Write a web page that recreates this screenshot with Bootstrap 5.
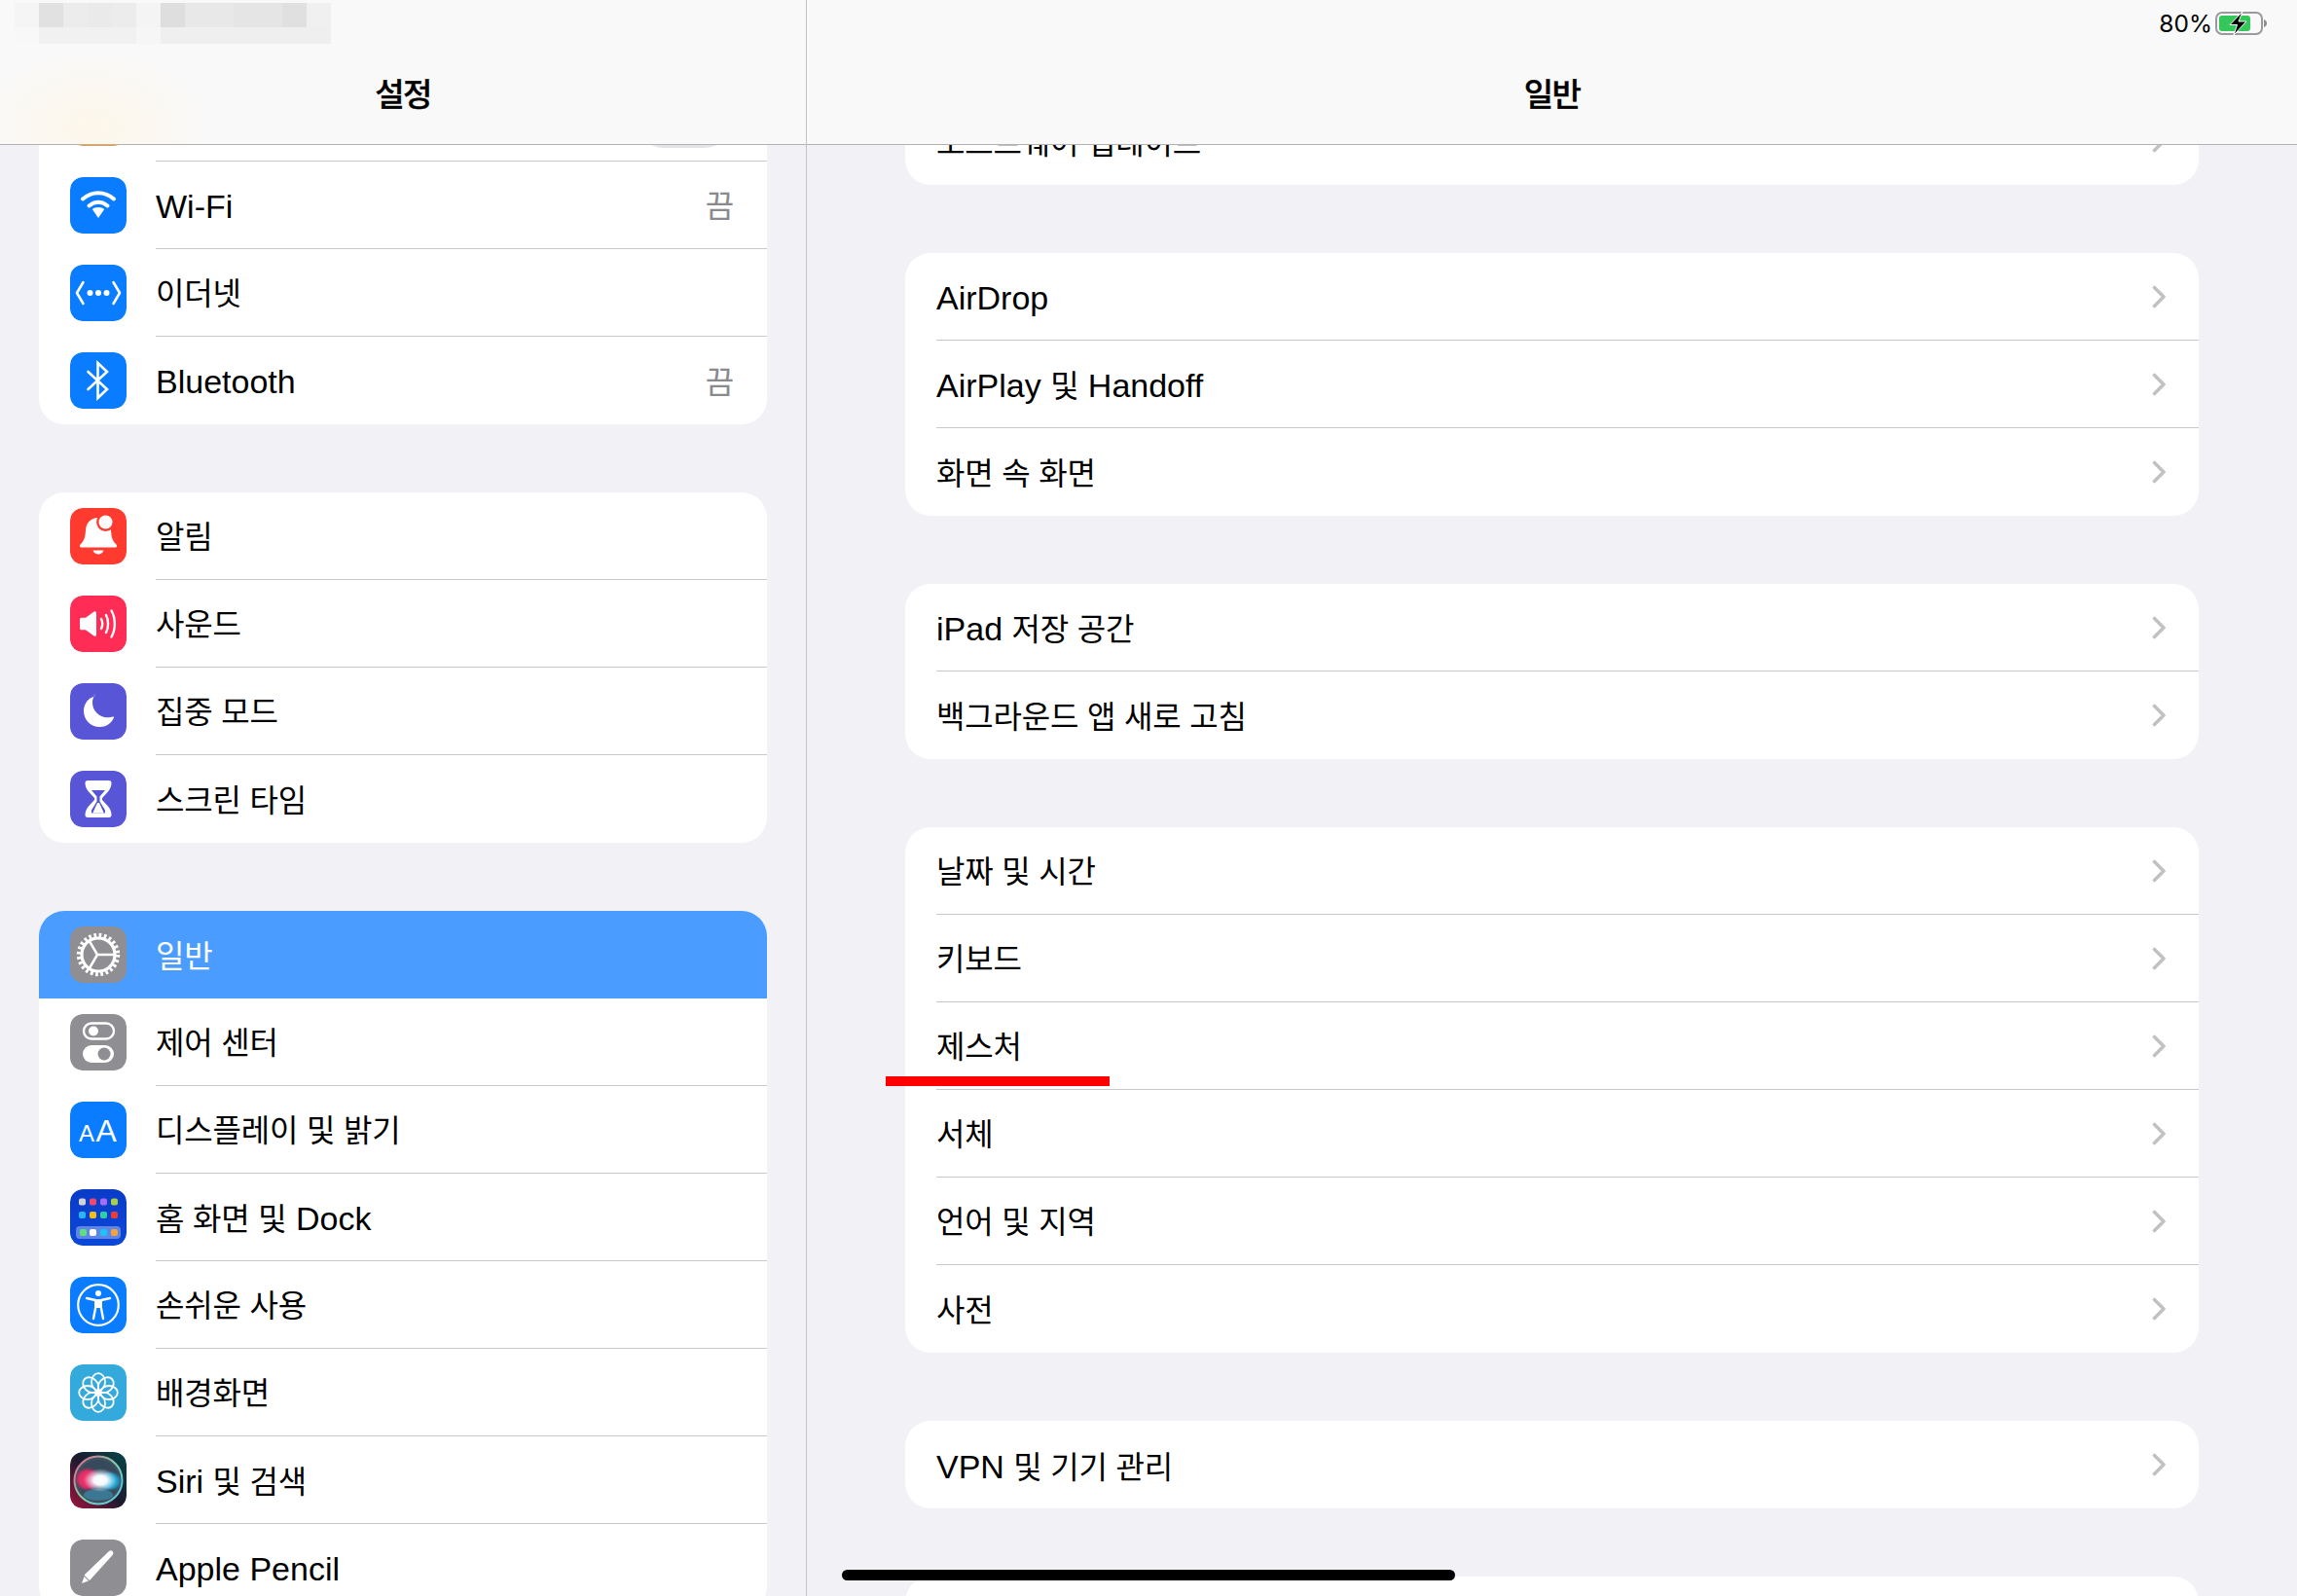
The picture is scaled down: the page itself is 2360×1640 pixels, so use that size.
<!DOCTYPE html>
<html lang="ko">
<head>
<meta charset="utf-8">
<title>설정 - 일반</title>
<link href="https://cdn.jsdelivr.net/npm/bootstrap@5.3.0/dist/css/bootstrap.min.css" rel="stylesheet">
<style>
html,body{width:2360px;height:1640px;overflow:hidden;margin:0}
body{background:#f1f1f6;color:#000;font-family:"Liberation Sans","Noto Sans CJK KR",sans-serif;font-size:34px;line-height:1}
.ko{font-family:"Noto Sans CJK KR",sans-serif;font-size:32px;letter-spacing:-.2px}
.stage{width:2360px;height:1640px;overflow:hidden}
.side{width:829px;height:1640px;border-right:1px solid #c3c3c6;padding:76px 40px 0;overflow:hidden;position:relative;flex:none}
.main{width:1531px;height:1640px;padding:100px 101px 0;overflow:hidden;position:relative;flex:none}
.sheet{background:#fff;border-radius:26px;overflow:hidden;margin-bottom:70px}
.line{height:90px;display:flex;align-items:center;position:relative;padding-left:32px;padding-right:34px}
.line-in{flex:1;min-width:0;height:100%;display:flex;align-items:center;justify-content:space-between;border-bottom:1px solid #c8c8cb;margin-right:-34px;padding-right:34px}
.line-in>span{padding-top:2px}
.line-in>span.ko{padding-top:0;padding-bottom:3px}
.line:last-child .line-in{border-bottom:0}
.side .line-in{margin-left:30px}
.tile{width:58px;height:58px;border-radius:13px;flex:none;display:block}
.off{color:#8a8a8e;font-size:32px}
.on{background:#4a9dfe;color:#fff}
.on .line-in{border-bottom:0}
.cv{width:14px;height:24px;flex:none}
.cv path{fill:none;stroke:#c2c2c5;stroke-width:3.6;stroke-linecap:round;stroke-linejoin:round}
.sw{width:102px;height:62px;border-radius:31px;background:#e3e3e8;flex:none}
.top{position:absolute;top:0;left:0;right:0;height:149px;background:#f9f9f9;border-bottom:1px solid #b2b2b2;display:flex;align-items:center;justify-content:center;padding-top:43px;z-index:5}
.top-l{background:radial-gradient(ellipse 120px 80px at 95px 130px,#fdf7ea 0,#fbf8f2 55%,rgba(249,249,249,0) 100%),#f9f9f9}
.top .ko{font-size:33px;letter-spacing:-1.6px;font-weight:500;-webkit-text-stroke:.4px #000}
.blurred{position:absolute;left:15px;top:3px;width:325px;height:42px;z-index:6;background:linear-gradient(90deg,#f5f5f5 0 25px,#e1e1e1 25px 50px,#ececec 50px 75px,#eaeaea 75px 100px,#ececec 100px 125px,#f4f4f4 125px 150px,#dedede 150px 175px,#e8e8e8 175px 225px,#e5e5e5 225px 275px,#e0e0e0 275px 300px,#f0f0f0 300px 325px) top/100% 25px no-repeat,linear-gradient(90deg,#f8f8f8 0 25px,#f1f1f1 25px 125px,#f6f6f6 125px 150px,#efefef 150px 325px)}
.stat{position:absolute;top:12px;right:30px;display:flex;align-items:center;gap:3px;z-index:6;font-family:"Inter",sans-serif;font-size:24.500px}
.slash{position:absolute;left:910px;top:1106px;width:230px;height:10px;background:#ff0000;z-index:7}
.grab{position:absolute;left:865px;top:1613px;width:630px;height:11px;border-radius:6px;background:#000;z-index:7}
</style>
</head>
<body>
<div class="stage d-flex position-relative">

<div class="side">
  <div class="top top-l"><span class="ko">설정</span></div>
  <div class="blurred"></div>
  <div class="sheet">
    <div class="line">
      <svg class="tile" viewBox="0 0 58 58"><rect width="58" height="58" rx="13" fill="#f49b2e"/></svg>
      <div class="line-in"><span class="ko">에어플레인 모드</span><div class="sw"></div></div>
    </div>
    <div class="line">
      <svg class="tile" viewBox="0 0 58 58"><rect width="58" height="58" rx="13" fill="#0a7cff"/><g fill="none" stroke="#fff" stroke-width="4" stroke-linecap="round"><path d="M13 22.500c9.500-8.500 22.500-8.500 32 0"/><path d="M19.500 29.500c5.800-5 13.200-5 19 0"/></g><path d="M29 31c2.800 0 5 .8 6.200 2L29 42l-6.200-9c1.200-1.200 3.400-2 6.200-2z" fill="#fff"/></svg>
      <div class="line-in"><span>Wi-Fi</span><span class="off ko">끔</span></div>
    </div>
    <div class="line">
      <svg class="tile" viewBox="0 0 58 58"><rect width="58" height="58" rx="13" fill="#0a7cff"/><path d="M13.500 18 7 29l6.500 11M44.500 18 51 29l-6.500 11" fill="none" stroke="#fff" stroke-width="2.600" stroke-linecap="round" stroke-linejoin="round"/><circle cx="20.500" cy="29" r="3" fill="#fff"/><circle cx="29" cy="29" r="3" fill="#fff"/><circle cx="37.500" cy="29" r="3" fill="#fff"/></svg>
      <div class="line-in"><span class="ko">이더넷</span></div>
    </div>
    <div class="line">
      <svg class="tile" viewBox="0 0 58 58"><rect width="58" height="58" rx="13" fill="#0a7cff"/><path d="M18.500 20 38 38 28.500 47V11l9.500 9L18.500 38" fill="none" stroke="#fff" stroke-width="2.600" stroke-linejoin="miter" stroke-linecap="round"/></svg>
      <div class="line-in"><span>Bluetooth</span><span class="off ko">끔</span></div>
    </div>
  </div>

  <div class="sheet">
    <div class="line">
      <svg class="tile" viewBox="0 0 58 58"><rect width="58" height="58" rx="13" fill="#ff3b30"/><path d="M29 10c-8 0-12.500 5.500-13 13-.5 8-2 11-5.500 14.500-1.200 1.200-.6 3 1.200 3h34.600c1.800 0 2.400-1.800 1.200-3C44 34 42.500 31 42 23c-.5-7.500-5-13-13-13z" fill="#fff"/><path d="M23.500 43.500h11c-.8 2.500-3 4-5.500 4s-4.700-1.500-5.500-4z" fill="#fff"/><circle cx="36.500" cy="14.500" r="8.200" fill="#fff" stroke="#ff3b30" stroke-width="2.400"/></svg>
      <div class="line-in"><span class="ko">알림</span></div>
    </div>
    <div class="line">
      <svg class="tile" viewBox="0 0 58 58"><rect width="58" height="58" rx="13" fill="#ff2d55"/><path d="M10 24.500c0-1 .8-1.800 1.800-1.800h4.200L24.500 16.500c1-.8 2.500-.2 2.500 1.200v22.600c0 1.400-1.500 2-2.500 1.200L16 35.300h-4.200c-1 0-1.800-.8-1.800-1.800z" fill="#fff"/><g fill="none" stroke="#fff" stroke-width="2.400" stroke-linecap="round"><path d="M32 24c1.500 3 1.500 7 0 10"/><path d="M37 20c2.700 5 2.700 13 0 18"/><path d="M42.500 15.500c4.500 8 4.500 19 0 27"/></g></svg>
      <div class="line-in"><span class="ko">사운드</span></div>
    </div>
    <div class="line">
      <svg class="tile" viewBox="0 0 58 58"><rect width="58" height="58" rx="13" fill="#5856d6"/><path d="M25.500 12.500C17.500 14.500 14 21.500 14 27.500 14 36.500 21 44 30.500 44c6 0 11.500-3 14.500-9.500.3-.7-.3-1.200-1-1-1.800.6-3.500.8-5.200.8-9.500 0-15.800-7.500-15.800-15.300 0-2.500.6-5 2.200-7.200.5-.7-.1-1.500-.7-1.300z" fill="#fff" transform="translate(0 1)"/></svg>
      <div class="line-in"><span class="ko">집중 모드</span></div>
    </div>
    <div class="line">
      <svg class="tile" viewBox="0 0 58 58"><rect width="58" height="58" rx="13" fill="#5856d6"/><path d="M18 10h22c1.500 0 2.500 1 2.500 2.500 0 3-1 6-3.500 9L33 28v2l6 6.500c2.500 3 3.500 6 3.500 9 0 1.500-1 2.500-2.500 2.500H18c-1.500 0-2.500-1-2.500-2.500 0-3 1-6 3.500-9L25 30v-2l-6-6.500c-2.500-3-3.500-6-3.500-9 0-1.500 1-2.500 2.500-2.500z" fill="#fff"/><path d="M22 20h14l-5.500 6.500v5l5.500 9v3H22v-3l5.500-9v-5z" fill="#5856d6"/><path d="M28 33h2l4.500 10h-11z" fill="#fff"/><path d="M23.500 43.500h11v1.500h-11z" fill="#fff"/></svg>
      <div class="line-in"><span class="ko">스크린 타임</span></div>
    </div>
  </div>

  <div class="sheet">
    <div class="line on">
      <svg class="tile" viewBox="0 0 58 58"><rect width="58" height="58" rx="13" fill="#8e8e93"/><circle cx="29" cy="29" r="17" fill="none" stroke="#fff" stroke-width="3.200"/><circle cx="29" cy="29" r="20" fill="none" stroke="#fff" stroke-width="4.400" stroke-dasharray="2.700 2.536"/><path d="M28 29H45M28 29 19.500 14.300M28 29 19.500 43.700" fill="none" stroke="#fff" stroke-width="2.500"/></svg>
      <div class="line-in"><span class="ko">일반</span></div>
    </div>
    <div class="line">
      <svg class="tile" viewBox="0 0 58 58"><rect width="58" height="58" rx="13" fill="#8e8e93"/><rect x="14" y="9.500" width="31" height="16" rx="8" fill="none" stroke="#fff" stroke-width="2.400"/><circle cx="24" cy="17.500" r="5" fill="#fff"/><rect x="13" y="32" width="32" height="18" rx="9" fill="#fff"/><circle cx="35" cy="41" r="6.500" fill="#8e8e93"/></svg>
      <div class="line-in"><span class="ko">제어 센터</span></div>
    </div>
    <div class="line">
      <svg class="tile" viewBox="0 0 58 58"><rect width="58" height="58" rx="13" fill="#0a7cff"/><text x="9" y="41" fill="#fff" font-family="Liberation Sans, sans-serif" font-size="24">A</text><text x="26.500" y="41" fill="#fff" font-family="Liberation Sans, sans-serif" font-size="32">A</text></svg>
      <div class="line-in"><span class="ko">디스플레이 및 밝기</span></div>
    </div>
    <div class="line">
      <svg class="tile" viewBox="0 0 58 58"><defs><linearGradient id="hg" x1="0" y1="0" x2="0" y2="1"><stop offset="0" stop-color="#0a3bc9"/><stop offset="1" stop-color="#0b48d8"/></linearGradient></defs><rect width="58" height="58" rx="13" fill="url(#hg)"/><g><rect x="9" y="9.500" width="7" height="7" rx="2" fill="#d5d5d5"/><rect x="20" y="9.500" width="7" height="7" rx="2" fill="#f0476e"/><rect x="31" y="9.500" width="7" height="7" rx="2" fill="#a86bf2"/><rect x="42" y="9.500" width="7" height="7" rx="2" fill="#a9cf47"/><rect x="9" y="23" width="7" height="7" rx="2" fill="#28b5f2"/><rect x="20" y="23" width="7" height="7" rx="2" fill="#f5bd17"/><rect x="31" y="23" width="7" height="7" rx="2" fill="#33cfa0"/><rect x="42" y="23" width="7" height="7" rx="2" fill="#f03a3a"/><rect x="6" y="38" width="46" height="13" rx="4" fill="#5f86e6"/><rect x="10" y="41" width="7" height="7" rx="2" fill="#5de07f"/><rect x="20" y="41" width="7" height="7" rx="2" fill="#fff"/><rect x="31" y="41" width="7" height="7" rx="2" fill="#1fc2f5"/><rect x="42" y="41" width="7" height="7" rx="2" fill="#f5a33a"/></g></svg>
      <div class="line-in"><span><span class="ko">홈 화면 및</span> Dock</span></div>
    </div>
    <div class="line">
      <svg class="tile" viewBox="0 0 58 58"><rect width="58" height="58" rx="13" fill="#0a7cff"/><circle cx="29" cy="29" r="20.800" fill="none" stroke="#fff" stroke-width="2.200"/><circle cx="29" cy="17" r="3" fill="#fff"/><path d="M25 23h8v9h-8z" fill="#fff"/><path d="M17 22 26 24M41 22 32 24M26.500 30 24 43M31.500 30 34 43" fill="none" stroke="#fff" stroke-width="2.400" stroke-linecap="round"/></svg>
      <div class="line-in"><span class="ko">손쉬운 사용</span></div>
    </div>
    <div class="line">
      <svg class="tile" viewBox="0 0 58 58"><rect width="58" height="58" rx="13" fill="#34aadc"/><g fill="none" stroke="#fff" stroke-width="1.800"><ellipse cx="29" cy="18" rx="7" ry="8.800"/><ellipse cx="29" cy="40" rx="7" ry="8.800"/><ellipse cx="18" cy="29" rx="8.800" ry="7"/><ellipse cx="40" cy="29" rx="8.800" ry="7"/><ellipse cx="29" cy="18" rx="7" ry="8.800" transform="rotate(45 29 29)"/><ellipse cx="29" cy="40" rx="7" ry="8.800" transform="rotate(45 29 29)"/><ellipse cx="18" cy="29" rx="8.800" ry="7" transform="rotate(45 29 29)"/><ellipse cx="40" cy="29" rx="8.800" ry="7" transform="rotate(45 29 29)"/></g><circle cx="29" cy="29" r="3.200" fill="#fff"/></svg>
      <div class="line-in"><span class="ko">배경화면</span></div>
    </div>
    <div class="line">
      <svg class="tile" viewBox="0 0 58 58"><defs><linearGradient id="sb" x1="0" y1="1" x2="1" y2="0"><stop offset="0" stop-color="#a3123f"/><stop offset=".5" stop-color="#1c1a2e"/><stop offset="1" stop-color="#07474a"/></linearGradient><linearGradient id="sr" x1="0" y1="0" x2="1" y2="1"><stop offset="0" stop-color="#e85d8a"/><stop offset=".5" stop-color="#7fd0a8"/><stop offset="1" stop-color="#58c3e8"/></linearGradient><radialGradient id="sw"><stop offset="0" stop-color="#fff"/><stop offset=".4" stop-color="#f4f9ff"/><stop offset="1" stop-color="#cfe8ff" stop-opacity="0"/></radialGradient><radialGradient id="sl"><stop offset="0" stop-color="#ff3a6c"/><stop offset=".7" stop-color="#d92f66"/><stop offset="1" stop-color="#b52a5c" stop-opacity=".2"/></radialGradient><radialGradient id="sc"><stop offset="0" stop-color="#2ec4ec"/><stop offset=".7" stop-color="#2296c0"/><stop offset="1" stop-color="#1a7fa5" stop-opacity=".2"/></radialGradient></defs><rect width="58" height="58" rx="13" fill="url(#sb)"/><circle cx="29" cy="29" r="24.500" fill="#3f5060" stroke="url(#sr)" stroke-width="2"/><circle cx="29" cy="29" r="21" fill="#364a5c"/><ellipse cx="18" cy="28" rx="13" ry="12" fill="url(#sl)"/><ellipse cx="41" cy="30" rx="12" ry="10" fill="url(#sc)"/><ellipse cx="29" cy="44" rx="15" ry="6" fill="#3fa2c9" opacity=".5"/><ellipse cx="31" cy="29" rx="17" ry="12" fill="url(#sw)"/></svg>
      <div class="line-in"><span>Siri <span class="ko">및 검색</span></span></div>
    </div>
    <div class="line">
      <svg class="tile" viewBox="0 0 58 58"><rect width="58" height="58" rx="13" fill="#8e8e93"/><path d="M40.500 12.500c1.800-1.800 4.300.7 2.500 3L20 41l-4.500-4.500z" fill="#fff" stroke="#fff" stroke-width="1.500" stroke-linejoin="round"/><path d="M14.500 38 19 42.500l-7 2.500z" fill="#fff"/></svg>
      <div class="line-in"><span>Apple Pencil</span></div>
    </div>
  </div>
</div>

<div class="main">
  <div class="top"><span class="ko">일반</span></div>
  <div class="stat"><span>80%</span>
    <svg width="54" height="24" viewBox="0 0 54 24"><rect x="1" y="1" width="47" height="22" rx="6" fill="none" stroke="#9a9a9e" stroke-width="2"/><rect x="4" y="4" width="32" height="16" rx="3" fill="#34c759"/><path d="M50 8c2 .7 3 2.200 3 4s-1 3.300-3 4z" fill="#8f8f93"/><path d="M28 0 15 13.500h7.500L19 24l13-14h-8z" fill="#000" stroke="#fff" stroke-width="1"/></svg>
  </div>
  <div class="sheet">
    <div class="line"><div class="line-in"><span class="ko">소프트웨어 업데이트</span><svg class="cv" viewBox="0 0 14 24"><path d="M2.500 2.500 12 12l-9.500 9.500"/></svg></div></div>
  </div>
  <div class="sheet">
    <div class="line"><div class="line-in"><span>AirDrop</span><svg class="cv" viewBox="0 0 14 24"><path d="M2.500 2.500 12 12l-9.500 9.500"/></svg></div></div>
    <div class="line"><div class="line-in"><span>AirPlay <span class="ko">및</span> Handoff</span><svg class="cv" viewBox="0 0 14 24"><path d="M2.500 2.500 12 12l-9.500 9.500"/></svg></div></div>
    <div class="line"><div class="line-in"><span class="ko">화면 속 화면</span><svg class="cv" viewBox="0 0 14 24"><path d="M2.500 2.500 12 12l-9.500 9.500"/></svg></div></div>
  </div>
  <div class="sheet">
    <div class="line"><div class="line-in"><span>iPad <span class="ko">저장 공간</span></span><svg class="cv" viewBox="0 0 14 24"><path d="M2.500 2.500 12 12l-9.500 9.500"/></svg></div></div>
    <div class="line"><div class="line-in"><span class="ko">백그라운드 앱 새로 고침</span><svg class="cv" viewBox="0 0 14 24"><path d="M2.500 2.500 12 12l-9.500 9.500"/></svg></div></div>
  </div>
  <div class="sheet">
    <div class="line"><div class="line-in"><span class="ko">날짜 및 시간</span><svg class="cv" viewBox="0 0 14 24"><path d="M2.500 2.500 12 12l-9.500 9.500"/></svg></div></div>
    <div class="line"><div class="line-in"><span class="ko">키보드</span><svg class="cv" viewBox="0 0 14 24"><path d="M2.500 2.500 12 12l-9.500 9.500"/></svg></div></div>
    <div class="line"><div class="line-in"><span class="ko">제스처</span><svg class="cv" viewBox="0 0 14 24"><path d="M2.500 2.500 12 12l-9.500 9.500"/></svg></div></div>
    <div class="line"><div class="line-in"><span class="ko">서체</span><svg class="cv" viewBox="0 0 14 24"><path d="M2.500 2.500 12 12l-9.500 9.500"/></svg></div></div>
    <div class="line"><div class="line-in"><span class="ko">언어 및 지역</span><svg class="cv" viewBox="0 0 14 24"><path d="M2.500 2.500 12 12l-9.500 9.500"/></svg></div></div>
    <div class="line"><div class="line-in"><span class="ko">사전</span><svg class="cv" viewBox="0 0 14 24"><path d="M2.500 2.500 12 12l-9.500 9.500"/></svg></div></div>
  </div>
  <div class="sheet">
    <div class="line"><div class="line-in"><span>VPN <span class="ko">및 기기 관리</span></span><svg class="cv" viewBox="0 0 14 24"><path d="M2.500 2.500 12 12l-9.500 9.500"/></svg></div></div>
  </div>
  <div class="sheet"><div class="line"></div></div>
</div>

<div class="slash"></div>
<div class="grab"></div>
</div>
<script src="https://cdn.jsdelivr.net/npm/bootstrap@5.3.0/dist/js/bootstrap.bundle.min.js"></script>
</body>
</html>
